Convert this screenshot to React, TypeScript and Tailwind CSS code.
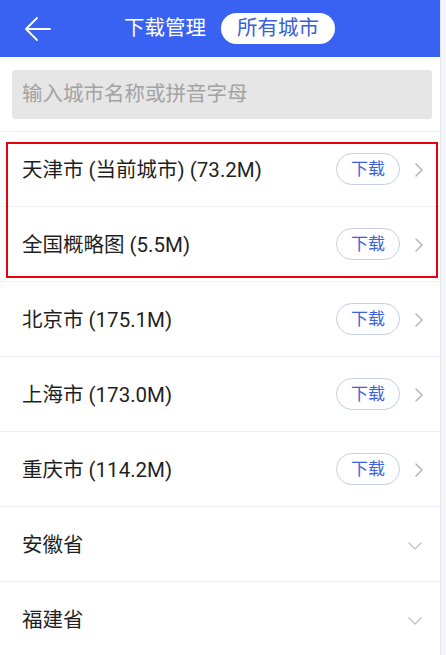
import React from 'react';

type Row = { name: string; kind: 'city' | 'province' };

const rows: Row[] = [
  { name: '天津市 (当前城市) (73.2M)', kind: 'city' },
  { name: '全国概略图 (5.5M)', kind: 'city' },
  { name: '北京市 (175.1M)', kind: 'city' },
  { name: '上海市 (173.0M)', kind: 'city' },
  { name: '重庆市 (114.2M)', kind: 'city' },
  { name: '安徽省', kind: 'province' },
  { name: '福建省', kind: 'province' },
];

const font = { fontFamily: 'Roboto, "Noto Sans CJK SC", sans-serif' };

function ChevronRight() {
  return (
    <svg width="10" height="16" viewBox="0 0 10 16" fill="none">
      <path d="M2 2l6 6-6 6" stroke="#b5b5b5" strokeWidth="1.5" strokeLinecap="round" strokeLinejoin="round" />
    </svg>
  );
}

function ChevronDown() {
  return (
    <svg width="16" height="10" viewBox="0 0 16 10" fill="none">
      <path d="M2 2l6 6 6-6" stroke="#c0c0c0" strokeWidth="1.3" strokeLinecap="round" strokeLinejoin="round" />
    </svg>
  );
}

export default function App() {
  return (
    <div className="relative w-[446px] h-[655px] overflow-hidden bg-[#f4f5f8]" style={font}>
      <div className="w-[441px] h-full bg-white border-r border-[#e6e8ee]">
        {/* header */}
        <div className="h-[57px] bg-[#3a62f2] flex items-center">
          <div className="w-[124px] pl-[24px] flex items-center">
            <svg width="28" height="26" viewBox="0 0 28 26" fill="none">
              <path d="M26 13H3M13 2L2 13l11 11" stroke="#fff" strokeWidth="1.8" strokeLinecap="round" strokeLinejoin="round" />
            </svg>
          </div>
          <span className="text-white text-[20.5px] leading-none">下载管理</span>
          <div className="ml-[15px] h-[31px] w-[114px] rounded-full bg-white flex items-center justify-center">
            <span className="text-[#3b5fd6] text-[20.5px] leading-none">所有城市</span>
          </div>
        </div>

        {/* search */}
        <div className="h-[75px] px-[12px] pt-[13px] border-b border-[#eef0f4]">
          <div className="h-[49px] w-[420px] rounded-[3px] bg-[#e6e6e6] flex items-center pl-[10px]">
            <span className="text-[20.5px] text-[#a3a3a3] leading-none">输入城市名称或拼音字母</span>
          </div>
        </div>

        {/* list */}
        {rows.map((r) => (
          <div key={r.name} className="h-[75px] border-b border-[#eef0f4] flex items-center pl-[22px] pr-[16px]">
            <span className="flex-1 text-[20.5px] text-[#1f1f1f] leading-none pt-[3px]">{r.name}</span>
            {r.kind === 'city' ? (
              <div className="flex items-center">
                <div className="h-[32px] w-[64px] rounded-full border border-[#c7cfe6] flex items-center justify-center">
                  <span className="text-[17px] text-[#3d63dc] leading-none">下载</span>
                </div>
                <div className="ml-[14px] pt-[2px]">
                  <ChevronRight />
                </div>
              </div>
            ) : (
              <div className="pr-[1px] pt-[4px]">
                <ChevronDown />
              </div>
            )}
          </div>
        ))}
      </div>

      {/* red annotation box */}
      <div className="absolute left-[6px] top-[142px] w-[432px] h-[136px] border-2 border-[#e8000b] pointer-events-none" />
    </div>
  );
}
